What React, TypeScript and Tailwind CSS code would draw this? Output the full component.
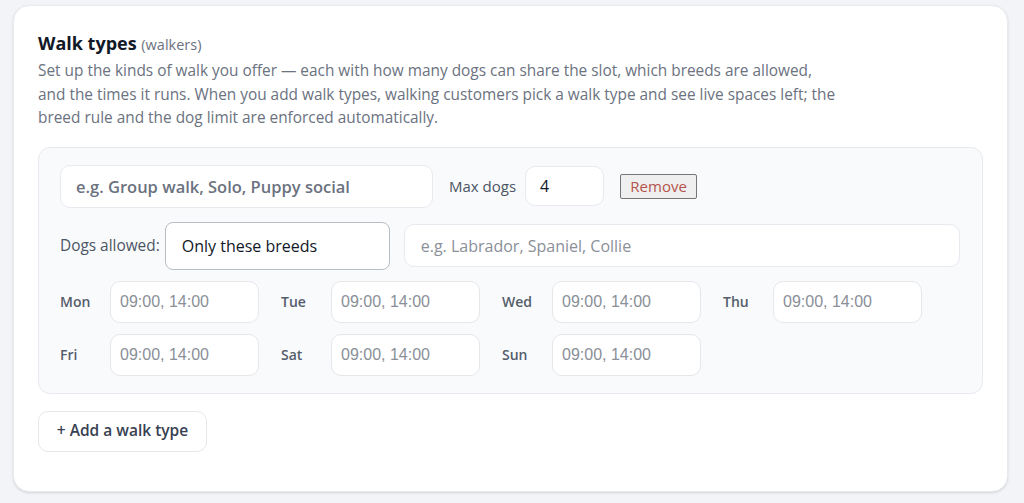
const days = [
  ["Mon", "Tue", "Wed", "Thu"],
  ["Fri", "Sat", "Sun"],
];

function TimeField({ day }: { day: string }) {
  return (
    <div className="flex items-center">
      <span className="w-[50px] text-[14px] font-semibold text-[#555d6b]">{day}</span>
      <input
        className="h-[42px] w-[149px] rounded-[10px] border border-[#e5e7eb] bg-white px-[9px] text-[16px] text-[#111827] outline-none placeholder:text-[#8a8f98] [font-family:'Liberation_Sans',Arial,sans-serif]"
        placeholder="09:00, 14:00"
      />
    </div>
  );
}

export default function App() {
  return (
    <div className="min-h-screen bg-[#f3f4f7] pt-[5px] pl-[13px] pr-[16px] pb-[11px] [font-family:'Open_Sans',sans-serif]">
      <div className="rounded-[16px] border border-[#e8eaef] bg-white px-[24px] pt-[24px] pb-[39px] shadow-sm">
        <h2 className="text-[18px] font-bold leading-[26px] text-[#111827]">
          Walk types <span className="text-[14.5px] font-normal text-[#6b7280]">(walkers)</span>
        </h2>
        <p className="mt-[1px] max-w-[800px] text-[15.4px] leading-[23.5px] text-[#6b7280]">
          Set up the kinds of walk you offer — each with how many dogs can share the slot, which breeds are allowed,
          and the times it runs. When you add walk types, walking customers pick a walk type and see live spaces left; the
          breed rule and the dog limit are enforced automatically.
        </p>

        <div className="mt-[17px] rounded-[12px] border border-[#e8eaef] bg-[#f9fafc] pl-[21px] pr-[22px] pt-[17px] pb-[17px]">
          <div className="flex items-center">
            <input
              className="h-[43px] w-[373px] rounded-[10px] border border-[#e8eaef] bg-white px-[15px] text-[16.5px] font-semibold text-[#111827] outline-none placeholder:text-[#6b7280]"
              placeholder="e.g. Group walk, Solo, Puppy social"
            />
            <label className="ml-[16px] flex items-center text-[15px] text-[#4b5563]">
              Max dogs
              <input
                className="ml-[9px] h-[40px] w-[79px] rounded-[10px] border border-[#e8eaef] bg-white px-[14px] text-[16px] text-[#111827] outline-none"
                defaultValue="4"
              />
            </label>
            <button className="ml-[16px] h-[25px] w-[77px] rounded-[2px] border border-[#767676] bg-[#efefef] text-[15px] text-[#b4534b]">
              Remove
            </button>
          </div>

          <div className="mt-[14px] flex items-center">
            <span className="text-[15.4px] text-[#4b5563]">Dogs allowed:</span>
            <div className="ml-[5px] flex h-[48px] w-[225px] items-center rounded-[8px] border border-[#b8bcc4] bg-white px-[16px] text-[16px] text-[#111827]">
              Only these breeds
            </div>
            <input
              className="ml-[14px] h-[43px] flex-1 rounded-[10px] border border-[#e8eaef] bg-white px-[16px] text-[16px] text-[#111827] outline-none placeholder:text-[#8a8f98]"
              placeholder="e.g. Labrador, Spaniel, Collie"
            />
          </div>

          <div className="mt-[11px] flex flex-col gap-[11px]">
            {days.map((row, i) => (
              <div key={i} className="flex gap-[22px]">
                {row.map((d) => (
                  <TimeField key={d} day={d} />
                ))}
              </div>
            ))}
          </div>
        </div>

        <button className="mt-[17px] h-[41px] w-[169px] rounded-[10px] border border-[#e5e7eb] bg-white text-[15.5px] font-semibold text-[#374151]">
          + Add a walk type
        </button>
      </div>
    </div>
  );
}
